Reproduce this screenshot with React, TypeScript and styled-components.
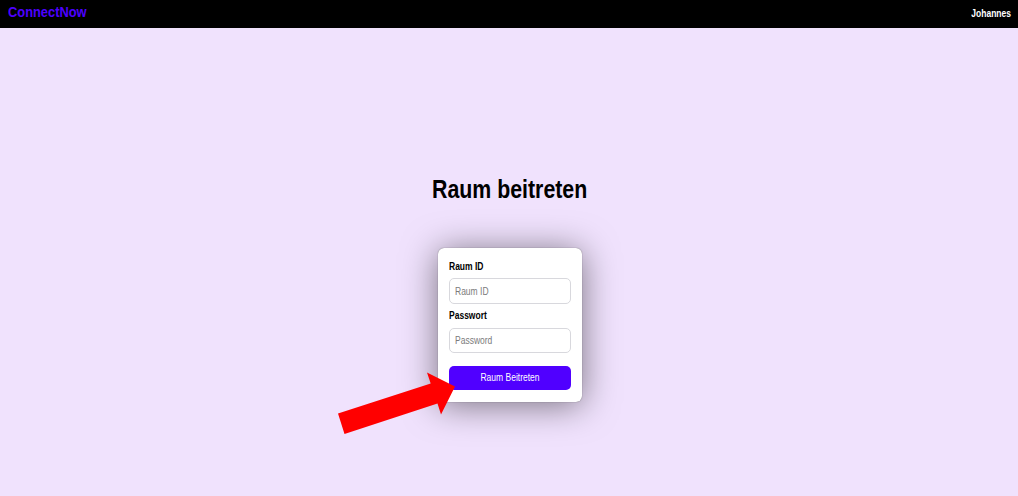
import React from "react";
import styled, { createGlobalStyle } from "styled-components";

const GlobalStyle = createGlobalStyle`
  * { box-sizing: border-box; }
  body {
    margin: 0;
    background: #f0e2fd;
    font-family: "Liberation Sans", Arial, sans-serif;
    color: #000;
  }
`;

const Page = styled.div`
  display: flex;
  flex-direction: column;
  height: 496px;
  overflow: hidden;
`;

const Header = styled.header`
  display: flex;
  justify-content: space-between;
  height: 28px;
  padding: 0 7px 0 8px;
  background: #000;
  white-space: nowrap;
`;

const Brand = styled.div`
  font-size: 15.5px;
  line-height: 23px;
  font-weight: bold;
  color: #4d00ff;
  transform: scaleX(0.83);
  transform-origin: left;
`;

const UserName = styled.div`
  font-size: 10.5px;
  line-height: 27px;
  font-weight: bold;
  color: #fff;
  transform: scaleX(0.81);
  transform-origin: right;
`;

const Main = styled.main`
  display: flex;
  flex-direction: column;
  align-items: center;
  padding: 146px 0 0 2px;
`;

const Title = styled.h1`
  margin: 0;
  font-size: 26px;
  line-height: 30px;
  transform: scaleX(0.82);
`;

const Card = styled.form`
  display: flex;
  flex-direction: column;
  width: 144px;
  height: 154px;
  margin-top: 44px;
  padding: 12px 11px 0 11px;
  background: #fff;
  border-radius: 6px;
  box-shadow: 0 0 1px rgba(0, 0, 0, 0.6), 0 3px 35px rgba(0, 0, 0, 0.5);
`;

const Label = styled.label`
  height: 12px;
  font-size: 10.5px;
  line-height: 13px;
  font-weight: bold;
  white-space: nowrap;
  transform: scaleX(0.81);
  transform-origin: left;
`;

const Field = styled.div<{ $compact?: boolean }>`
  height: ${(p) => (p.$compact ? 25 : 26)}px;
  margin: ${(p) => (p.$compact ? 7 : 6)}px 0 5px;
  padding: 0 5px;
  border: 1px solid #d8d8dd;
  border-radius: 5px;
`;

const Input = styled.input`
  display: block;
  width: 132px;
  height: 24px;
  padding: 0;
  border: 0;
  outline: 0;
  background: transparent;
  font: 10.5px "Liberation Sans", Arial, sans-serif;
  transform: scaleX(0.81);
  transform-origin: left;
  &::placeholder { color: #7b7b7b; opacity: 1; }
`;

const PasswordInput = styled(Input)`
  height: 22px;
`;

const Submit = styled.button`
  height: 24px;
  margin-top: 7.5px;
  padding: 0 0 2px;
  border: 0;
  border-radius: 5px;
  background: #5000ff;
  color: #fff;
  font: 10.5px "Liberation Sans", Arial, sans-serif;
`;

const SubmitText = styled.span`
  display: block;
  line-height: 22px;
  transform: scaleX(0.81);
`;

const Arrow = styled.svg`
  position: absolute;
  left: 330px;
  top: 365px;
`;

export default function App() {
  return (
    <Page>
      <GlobalStyle />
      <Header>
        <Brand>ConnectNow</Brand>
        <UserName>Johannes</UserName>
      </Header>
      <Main>
        <Title>Raum beitreten</Title>
        <Card>
          <Label htmlFor="room">Raum ID</Label>
          <Field><Input id="room" placeholder="Raum ID" /></Field>
          <Label htmlFor="password">Passwort</Label>
          <Field $compact><PasswordInput id="password" type="password" placeholder="Password" /></Field>
          <Submit type="button"><SubmitText>Raum Beitreten</SubmitText></Submit>
        </Card>
      </Main>
      <Arrow width="130" height="75" viewBox="330 365 130 75">
        <polygon points="338,413.5 430.7,383.5 427,372.5 455,386.5 441,414.5 437.5,403.5 344.5,434" fill="#f00" />
      </Arrow>
    </Page>
  );
}
